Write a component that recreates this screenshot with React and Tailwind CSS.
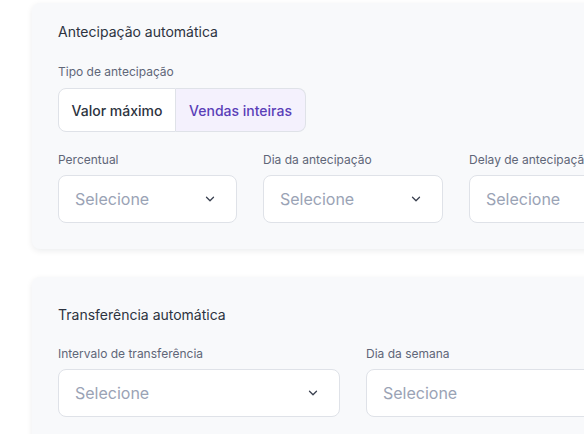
import React from "react";

function Chevron() {
  return (
    <svg width="10" height="6" viewBox="0 0 10 6" fill="none" className="shrink-0">
      <path d="M1.5 1.2l3.5 3.5 3.5-3.5" stroke="#3a4150" strokeWidth="1.3" strokeLinecap="round" strokeLinejoin="round" />
    </svg>
  );
}

function Select({ w, chevron = true }) {
  return (
    <div
      className={`${w} h-[48px] shrink-0 rounded-[8px] border border-[#dfe2e8] bg-white flex items-center justify-between pl-[16px] pr-[21px]`}
    >
      <span className="text-[16px] text-[#9aa3b5]">Selecione</span>
      {chevron && <Chevron />}
    </div>
  );
}

function Field({ label, w, chevron }) {
  return (
    <div className="flex flex-col shrink-0">
      <div className="text-[12px] leading-[16px] text-[#5f6678] mb-[7px] whitespace-nowrap">{label}</div>
      <Select w={w} chevron={chevron} />
    </div>
  );
}

export default function App() {
  return (
    <div
      className="w-[584px] h-[434px] overflow-hidden bg-white"
      style={{ fontFamily: "Inter, 'Noto Sans', sans-serif" }}
    >
      <div className="pt-[3px] pl-[32px] flex flex-col gap-[28px] w-[700px]">
        <div className="rounded-[8px] bg-[#f8f9fb] shadow-[0_2px_6px_rgba(16,24,40,0.08)] pl-[26px] pt-[19px] pb-[26px]">
          <div className="text-[14px] leading-[20px] text-[#2d3340]">Antecipação automática</div>
          <div className="mt-[22px] text-[12px] leading-[16px] text-[#5f6678]">Tipo de antecipação</div>
          <div className="mt-[8px] flex">
            <div className="h-[44px] w-[118px] flex items-center justify-center rounded-l-[8px] border border-[#dfe2e8] bg-white text-[14px] font-medium text-[#2d3340]">
              Valor máximo
            </div>
            <div className="h-[44px] w-[130px] flex items-center justify-center rounded-r-[8px] border border-l-0 border-[#dfe2e8] bg-[#f4f1fd] text-[14px] font-medium text-[#5a3fb8]">
              Vendas inteiras
            </div>
          </div>
          <div className="mt-[20px] flex gap-[26px]">
            <Field label="Percentual" w="w-[179px]" />
            <Field label="Dia da antecipação" w="w-[180px]" />
            <Field label="Delay de antecipação" w="w-[180px]" />
          </div>
        </div>
        <div className="rounded-[8px] bg-[#f8f9fb] shadow-[0_2px_6px_rgba(16,24,40,0.08)] pl-[26px] pt-[28px] pb-[26px]">
          <div className="text-[14px] leading-[20px] text-[#2d3340]">Transferência automática</div>
          <div className="mt-[21px] flex gap-[26px]">
            <Field label="Intervalo de transferência" w="w-[282px]" />
            <Field label="Dia da semana" w="w-[282px]" />
          </div>
        </div>
      </div>
    </div>
  );
}
